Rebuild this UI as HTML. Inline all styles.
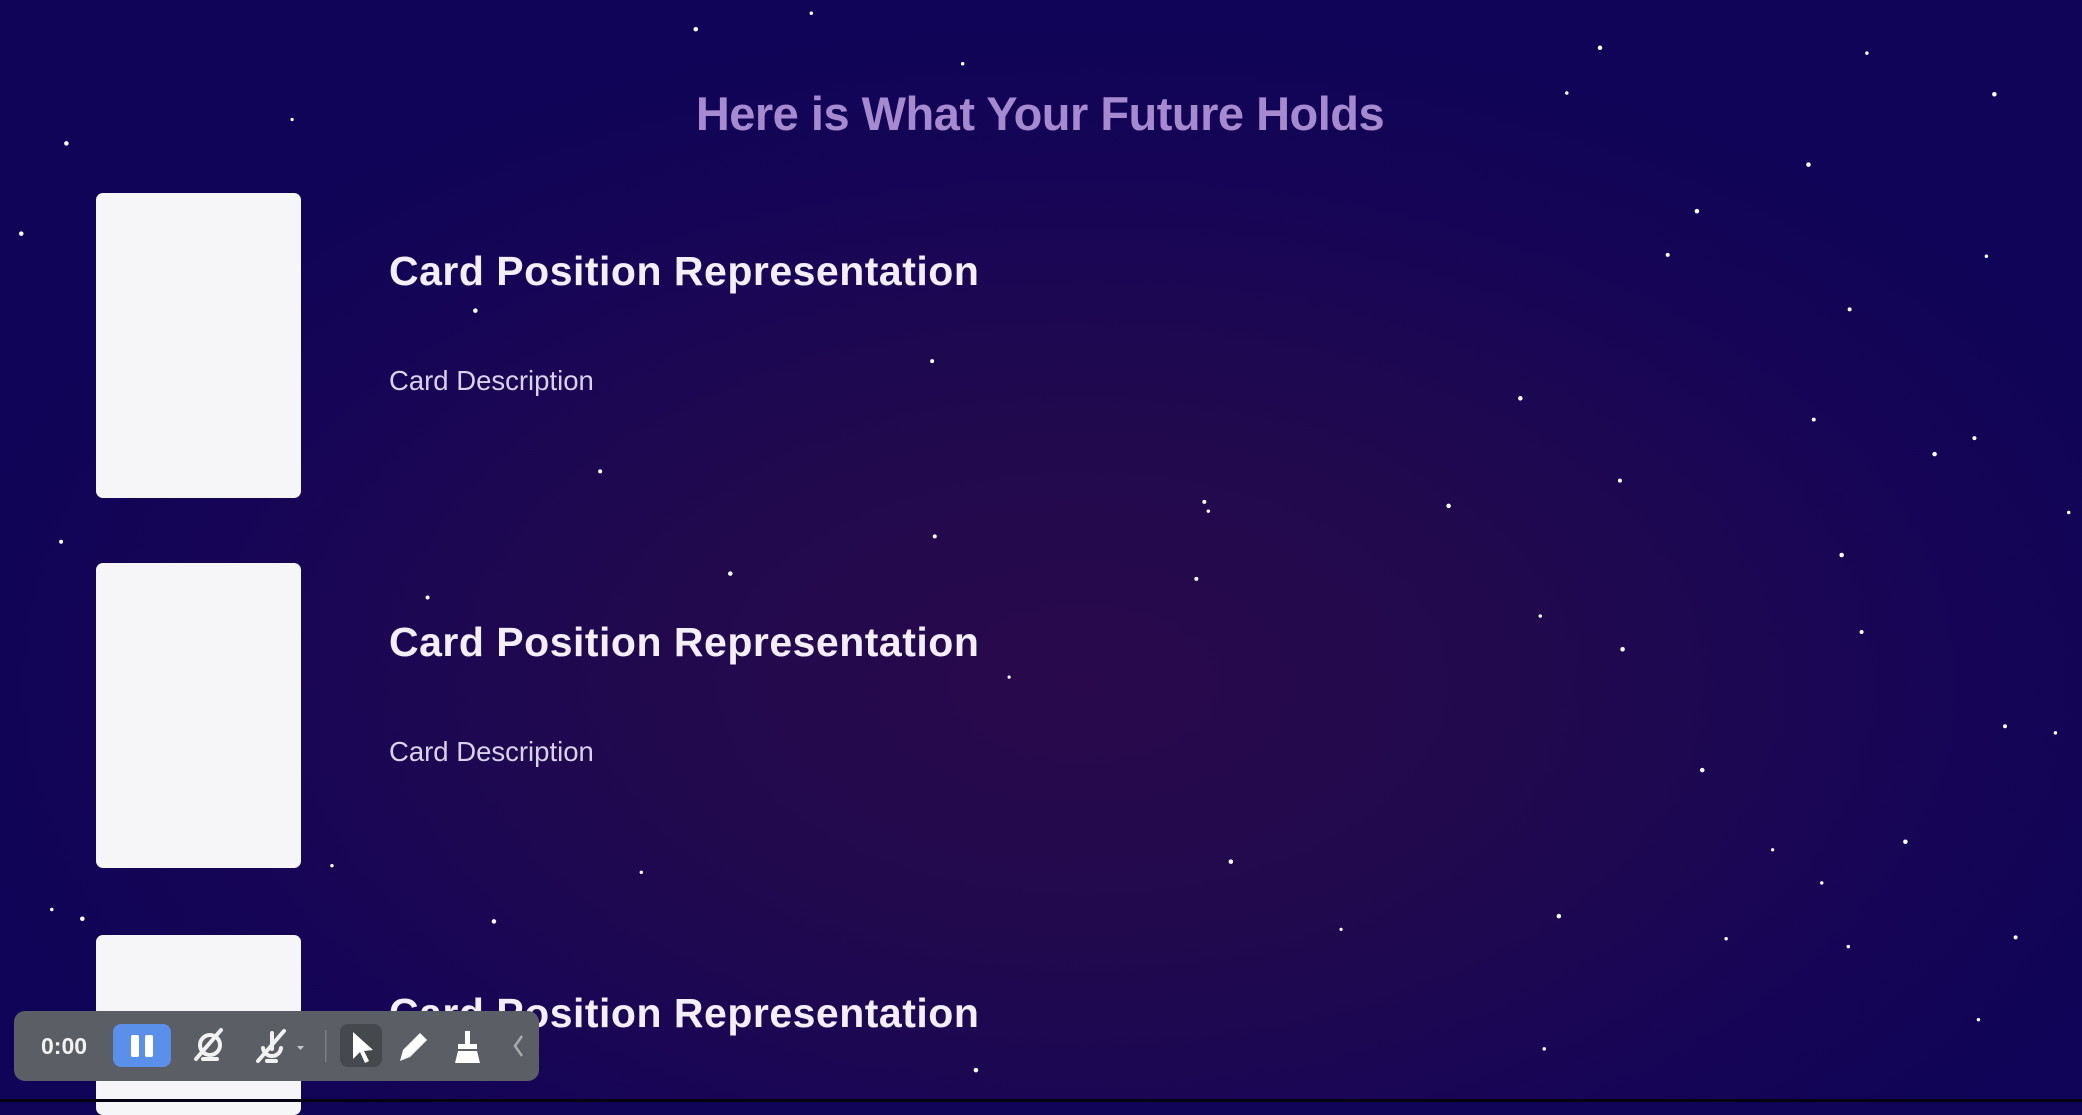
<!DOCTYPE html>
<html><head><meta charset="utf-8"><style>
html,body{margin:0;padding:0}
body{width:2082px;height:1102px;overflow:hidden;position:relative;
background:radial-gradient(ellipse 55% 60% at 52% 62%,#29094c 0%,#21094e 40%,#170556 75%,#0f0457 100%);
font-family:"Liberation Sans",sans-serif}
.stars{position:absolute;left:0;top:0}
.title{position:absolute;left:0;width:2080px;top:86px;text-align:center;color:#a68ad0;font-weight:bold;font-size:47px;letter-spacing:-0.5px}
.card{position:absolute;left:96px;width:205px;height:305px;background:#f6f5f8;border-radius:7px}
.h{position:absolute;left:389px;color:#f3eef8;font-weight:bold;font-size:41px;letter-spacing:0.5px;white-space:nowrap}
.d{position:absolute;left:389px;color:#d9d2ea;font-size:27.5px}
.tb{position:absolute;left:14px;top:1011px;width:525px;height:70px;background:#5b5e64;border-radius:11px}
.bottom{position:absolute;left:0;top:1099px;width:2082px;height:3px;background:#050312}
</style></head><body>
<svg class="stars" width="2082" height="1102" viewBox="0 0 1568 830" preserveAspectRatio="none">
<g fill="#fff">
<circle cx="524" cy="22" r="1.7"/><circle cx="1205" cy="36" r="1.7"/><circle cx="1502" cy="71" r="1.7"/><circle cx="50" cy="108" r="1.7"/><circle cx="1362" cy="124" r="1.7"/><circle cx="1278" cy="159" r="1.7"/><circle cx="16" cy="176" r="1.7"/><circle cx="1256" cy="192" r="1.5"/><circle cx="1496" cy="193" r="1.3"/><circle cx="358" cy="234" r="1.7"/><circle cx="1393" cy="233" r="1.5"/><circle cx="1145" cy="300" r="1.7"/><circle cx="1366" cy="316" r="1.5"/><circle cx="1487" cy="330" r="1.5"/><circle cx="1457" cy="342" r="1.7"/><circle cx="452" cy="355" r="1.5"/><circle cx="1220" cy="362" r="1.5"/><circle cx="907" cy="378" r="1.5"/><circle cx="1091" cy="381" r="1.7"/><circle cx="1558" cy="386" r="1.3"/><circle cx="46" cy="408" r="1.5"/><circle cx="1387" cy="418" r="1.7"/><circle cx="550" cy="432" r="1.7"/><circle cx="901" cy="436" r="1.5"/><circle cx="1160" cy="464" r="1.3"/><circle cx="1222" cy="489" r="1.7"/><circle cx="1402" cy="476" r="1.5"/><circle cx="1510" cy="547" r="1.5"/><circle cx="1548" cy="552" r="1.3"/><circle cx="1282" cy="580" r="1.7"/><circle cx="1435" cy="634" r="1.7"/><circle cx="927" cy="649" r="1.7"/><circle cx="483" cy="657" r="1.3"/><circle cx="1372" cy="665" r="1.3"/><circle cx="39" cy="685" r="1.3"/><circle cx="62" cy="692" r="1.7"/><circle cx="372" cy="694" r="1.7"/><circle cx="1174" cy="690" r="1.7"/><circle cx="1300" cy="707" r="1.3"/><circle cx="1392" cy="713" r="1.3"/><circle cx="1518" cy="706" r="1.5"/><circle cx="735" cy="806" r="1.7"/><circle cx="611" cy="10" r="1.3"/><circle cx="725" cy="48" r="1.3"/><circle cx="1163" cy="790" r="1.3"/><circle cx="1490" cy="768" r="1.3"/><circle cx="702" cy="272" r="1.5"/><circle cx="704" cy="404" r="1.5"/><circle cx="322" cy="450" r="1.5"/><circle cx="250" cy="652" r="1.3"/><circle cx="910" cy="385" r="1.3"/><circle cx="1180" cy="70" r="1.3"/><circle cx="1406" cy="40" r="1.3"/><circle cx="220" cy="90" r="1.2"/><circle cx="760" cy="510" r="1.2"/><circle cx="1335" cy="640" r="1.2"/><circle cx="1010" cy="700" r="1.2"/>
</g></svg>
<div class="title">Here is What Your Future Holds</div>
<div class="card" style="top:193px"></div>
<div class="card" style="top:563px"></div>
<div class="card" style="top:935px;height:180px"></div>
<div class="h" style="top:248px">Card Position Representation</div>
<div class="d" style="top:365px">Card Description</div>
<div class="h" style="top:619px">Card Position Representation</div>
<div class="d" style="top:736px">Card Description</div>
<div class="h" style="top:990px">Card Position Representation</div>
<div class="tb">
<svg width="525" height="70" viewBox="0 3 525 70">
<text x="27" y="46" fill="#f2f2f2" font-family="Liberation Sans" font-size="23" font-weight="bold">0:00</text>
<rect x="99" y="16" width="58" height="43" rx="8" fill="#5b90ea"/>
<rect x="117" y="27" width="8" height="22" rx="2" fill="#fff"/><rect x="131" y="27" width="8" height="22" rx="2" fill="#fff"/>
<g stroke="#f2f2f2" stroke-width="4" fill="none" stroke-linecap="round">
<circle cx="196" cy="37" r="10"/><path d="M189 51h14M182 51l25-29"/>
<path d="M258 25v16M267 40a9 9 0 0 1-9 8 9 9 0 0 1-9-8M253 53h9M244 53l26-30"/>
</g>
<path d="M283 38l7 0-3.5 4z" fill="#c8c8c8"/>
<rect x="311" y="22" width="1.5" height="32" fill="#7a7d82"/>
<rect x="326" y="16" width="42" height="43" rx="8" fill="#45484d"/>
<path d="M339 24l0 27 7-7 5 11 4-2-5-10 9-1z" fill="#fff"/>
<path d="M386 53l3-11 17-17 7 7-17 17z" fill="#fff"/>
<path d="M451 23h5v13h7v5h-19v-5h7zM444 43h19l3 12h-25z" fill="#fff"/>
<path d="M508 28l-7 10 7 10" stroke="#a8aaae" stroke-width="2.5" fill="none"/>
</svg>
</div>
<div class="bottom"></div>
</body></html>
